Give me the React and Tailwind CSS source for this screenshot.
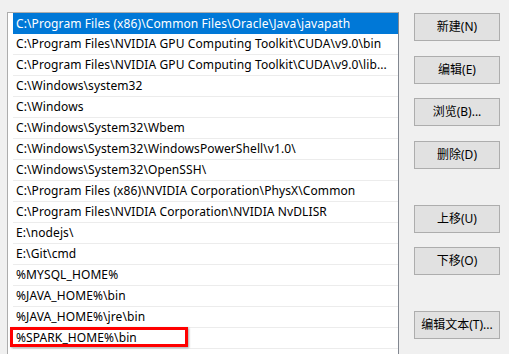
import React from 'react';

const paths = [
  'C:\\Program Files (x86)\\Common Files\\Oracle\\Java\\javapath',
  'C:\\Program Files\\NVIDIA GPU Computing Toolkit\\CUDA\\v9.0\\bin',
  'C:\\Program Files\\NVIDIA GPU Computing Toolkit\\CUDA\\v9.0\\lib...',
  'C:\\Windows\\system32',
  'C:\\Windows',
  'C:\\Windows\\System32\\Wbem',
  'C:\\Windows\\System32\\WindowsPowerShell\\v1.0\\',
  'C:\\Windows\\System32\\OpenSSH\\',
  'C:\\Program Files (x86)\\NVIDIA Corporation\\PhysX\\Common',
  'C:\\Program Files\\NVIDIA Corporation\\NVIDIA NvDLISR',
  'E:\\nodejs\\',
  'E:\\Git\\cmd',
  '%MYSQL_HOME%',
  '%JAVA_HOME%\\bin',
  '%JAVA_HOME%\\jre\\bin',
  '%SPARK_HOME%\\bin',
];

function Btn({ children, className = '' }) {
  return (
    <button
      type="button"
      className={`h-[28px] w-[86px] bg-[#e1e1e1] border border-[#adadad] text-[12px] text-black flex items-center justify-center ${className}`}
    >
      {children}
    </button>
  );
}

export default function App() {
  return (
    <div
      className="w-[509px] h-[354px] bg-[#f0f0f0] overflow-hidden flex"
      style={{ fontFamily: '"Noto Sans", "Noto Sans CJK SC", sans-serif' }}
    >
      {/* lista de caminhos */}
      <div className="ml-[7px] mt-[12px] w-[392px] h-[360px] bg-white border-t border-l border-[#adadad] border-r border-r-[#828790] pl-[5px] shrink-0">
        {paths.map((p, i) => {
          const selected = i === 0;
          const last = i === paths.length - 1;
          return (
            <div
              key={p}
              className={`relative h-[21px] pl-[3px] flex items-center text-[12px] tracking-[0.1px] whitespace-nowrap ${
                selected ? 'bg-[#0078d7] text-white' : 'text-black border-b border-[#ececec]'
              }`}
            >
              {p}
              {last && (
                <span className="absolute left-[-3px] top-[-1px] w-[178px] h-[20px] border-[3px] border-[#ff0000] shadow-[1px_1px_2px_rgba(0,0,0,0.35)]" />
              )}
            </div>
          );
        })}
      </div>

      {/* botões */}
      <div className="ml-[15px] mt-[13px] flex flex-col">
        <Btn>新建(N)</Btn>
        <Btn className="mt-[15px]">编辑(E)</Btn>
        <Btn className="mt-[14px]">浏览(B)...</Btn>
        <Btn className="mt-[15px]">删除(D)</Btn>
        <Btn className="mt-[36px]">上移(U)</Btn>
        <Btn className="mt-[14px]">下移(O)</Btn>
        <Btn className="mt-[36px]">编辑文本(T)...</Btn>
      </div>
    </div>
  );
}
